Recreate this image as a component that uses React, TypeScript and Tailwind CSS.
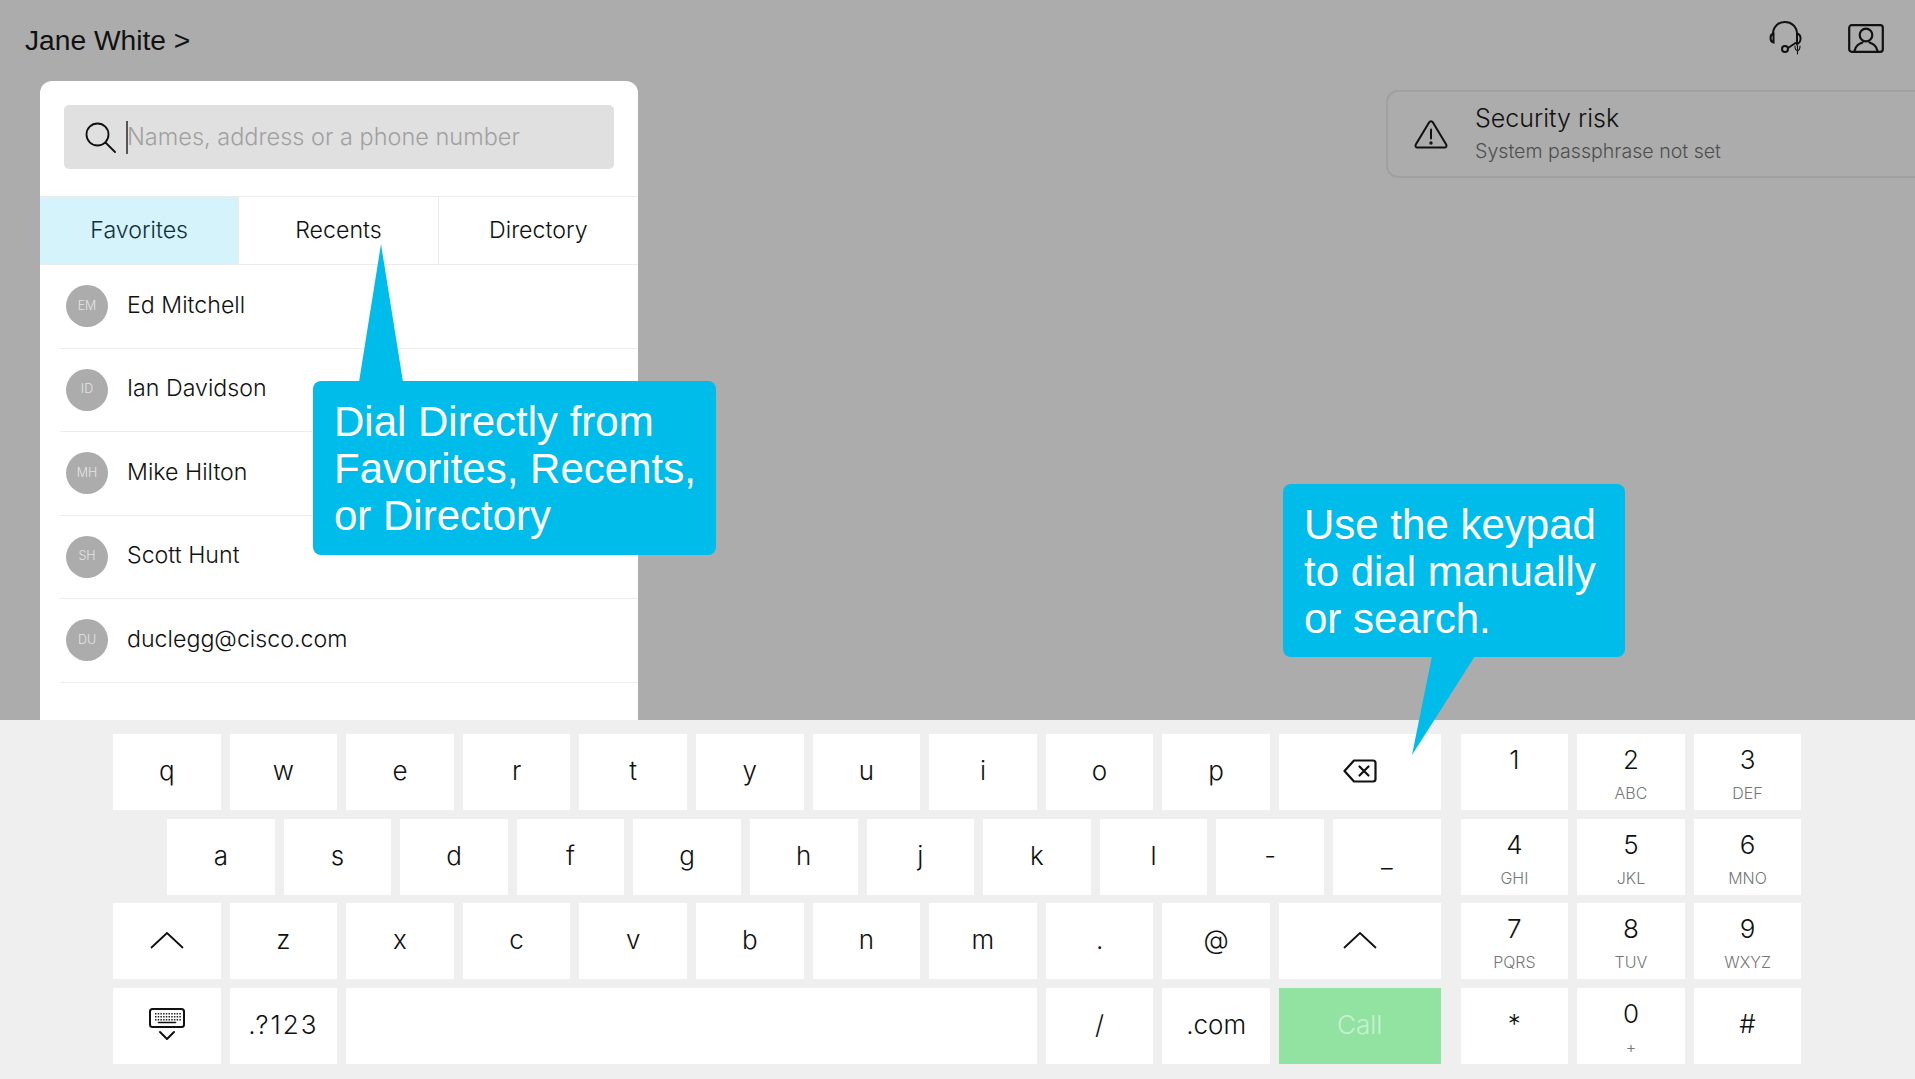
import { Fragment } from "react";

const inter = "font-['Inter','Liberation_Sans',sans-serif]";

const contacts = [
  { initials: "EM", name: "Ed Mitchell" },
  { initials: "ID", name: "Ian Davidson" },
  { initials: "MH", name: "Mike Hilton" },
  { initials: "SH", name: "Scott Hunt" },
  { initials: "DU", name: "duclegg@cisco.com" },
];

const numpad = [
  ["1", ""],
  ["2", "ABC"],
  ["3", "DEF"],
  ["4", "GHI"],
  ["5", "JKL"],
  ["6", "MNO"],
  ["7", "PQRS"],
  ["8", "TUV"],
  ["9", "WXYZ"],
  ["*", ""],
  ["0", "+"],
  ["#", ""],
];

function HeadsetIcon() {
  return (
    <svg width="34" height="34" viewBox="0 0 34 34" fill="none" stroke="#111" strokeWidth="2" strokeLinecap="round">
      <path d="M4 13 C4 5.5 9.5 1 16 1 C22.5 1 28 5.5 28 13" />
      <path d="M4.5 12.5 C0.5 13.5 0.5 20.5 4.5 21.5 Z" />
      <path d="M28 12.5 C32.5 13.5 33 21 28 23 Z" />
      <path d="M19 27 L26.5 22" />
      <circle cx="16" cy="28" r="3" />
      <path d="M28.5 24.5 V33 M26 25 C26 28.5 27 29.5 28.5 29.5 C30 29.5 31 28.5 31 25" strokeWidth="1.1" />
    </svg>
  );
}

function PersonBoxIcon() {
  return (
    <svg width="36" height="29" viewBox="0 0 36 29" fill="none" stroke="#111" strokeWidth="2.2" strokeLinecap="round">
      <rect x="1.2" y="1.2" width="33.6" height="26.6" rx="2.5" />
      <circle cx="18" cy="11" r="6.3" />
      <path d="M6.5 27 C7.5 21.5 11 20 14.5 18.5 M29.5 27 C28.5 21.5 25 20 21.5 18.5" />
    </svg>
  );
}

function WarningIcon() {
  return (
    <svg width="34" height="29" viewBox="0 0 34 29" fill="none" stroke="#111" strokeWidth="2" strokeLinejoin="round" strokeLinecap="round">
      <path d="M15.2 2.2 C16 0.8 18 0.8 18.8 2.2 L32.2 24.6 C33 26 32.2 27.6 30.6 27.6 H3.4 C1.8 27.6 1 26 1.8 24.6 Z" />
      <path d="M17 9.5 V18.5" />
      <circle cx="17" cy="23" r="0.7" fill="#111" />
    </svg>
  );
}

function SearchIcon() {
  return (
    <svg width="31" height="31" viewBox="0 0 31 31" fill="none" stroke="#111" strokeWidth="1.8" strokeLinecap="round">
      <circle cx="12.5" cy="12.5" r="11" />
      <path d="M20.5 20.5 L30 30" />
    </svg>
  );
}

function ChevronUpIcon() {
  return (
    <svg width="34" height="18" viewBox="0 0 34 18" fill="none" stroke="#111" strokeWidth="1.8" strokeLinecap="round" strokeLinejoin="round">
      <path d="M1.5 16.5 L17 2 L32.5 16.5" />
    </svg>
  );
}

function BackspaceIcon() {
  return (
    <svg width="34" height="24" viewBox="0 0 34 24" fill="none" stroke="#111" strokeWidth="2.2" strokeLinecap="round" strokeLinejoin="round">
      <path d="M11 1.5 H30 C31.5 1.5 32.5 2.5 32.5 4 V20 C32.5 21.5 31.5 22.5 30 22.5 H11 L1.5 12 Z" />
      <path d="M16.5 7.5 L25.5 16.5 M25.5 7.5 L16.5 16.5" />
    </svg>
  );
}

function KeyboardIcon() {
  const dots = [];
  for (let r = 0; r < 3; r++) {
    for (let c = 0; c < 10; c++) {
      dots.push(<rect key={`${r}-${c}`} x={6 + c * 2.7} y={5 + r * 3} width="1.5" height="1.5" fill="#222" />);
    }
  }
  return (
    <svg width="36" height="33" viewBox="0 0 36 33" fill="none" stroke="#111" strokeWidth="2" strokeLinecap="round" strokeLinejoin="round">
      <rect x="1" y="1" width="34" height="18" rx="2.5" />
      <g stroke="none">{dots}</g>
      <path d="M9.5 14.5 H26.5" strokeWidth="1.6" />
      <path d="M11 24 L18 31 L25 24" />
    </svg>
  );
}

function Key({ children, wide, span6 }: { children?: React.ReactNode; wide?: boolean; span6?: boolean }) {
  return (
    <div
      className={`h-[76px] pb-[3px] bg-white flex items-center justify-center shrink-0 text-[26px] font-light text-[#111] ${
        wide ? "w-[161.6px]" : span6 ? "w-[690.6px]" : "w-[107.6px]"
      }`}
    >
      {children}
    </div>
  );
}

function Callout({
  className,
  tail,
  tailClass,
  viewBox,
  lines,
}: {
  className: string;
  tail: string;
  tailClass: string;
  viewBox: string;
  lines: string[];
}) {
  return (
    <div className={`absolute bg-[#00bceb] rounded-[8px] text-white font-['Liberation_Sans',sans-serif] text-[42px] leading-[47px] pl-[21px] pt-[17px] ${className}`}>
      <svg className={`absolute ${tailClass}`} viewBox={viewBox} fill="#00bceb">
        <polygon points={tail} />
      </svg>
      {lines.map((l) => (
        <Fragment key={l}>
          <span className="relative whitespace-nowrap">{l}</span>
          <br />
        </Fragment>
      ))}
    </div>
  );
}

export default function App() {
  return (
    <div className={`relative w-[1915px] h-[1079px] overflow-hidden flex flex-col ${inter}`}>
      {/* Dimmed call screen */}
      <div className="h-[719.5px] shrink-0 bg-[#acacac] flex flex-col overflow-hidden">
        <div className="h-[81px] shrink-0 flex items-start justify-between pl-[25px] pr-[31px]">
          <div className="mt-[22px] text-[28.2px] leading-[36px] font-['Liberation_Sans',sans-serif] text-[#111]">Jane White &gt;</div>
          <div className="flex items-center gap-[45px] mt-[21px]">
            <HeadsetIcon />
            <PersonBoxIcon />
          </div>
        </div>

        <div className="flex-1 flex min-h-0">
          {/* Search panel */}
          <div className="w-[598px] ml-[40px] shrink-0 bg-white rounded-t-[12px] flex flex-col">
            <div className="mx-[24px] mt-[24px] h-[64px] bg-[#e0e0e0] rounded-[5px] flex items-center pl-[21px]">
              <SearchIcon />
              <div className="w-[2px] h-[33px] bg-[#555] ml-[10px]" />
              <span className="text-[23.5px] font-light text-[#a0a0a0] whitespace-nowrap -mt-[1px] -ml-[1px]">Names, address or a phone number</span>
            </div>

            <div className="mt-[27px] h-[69px] grid grid-cols-3 border-y border-[#ececec] text-[23.2px] font-light text-[#111]">
              <div className="bg-[#d5f3fa] flex items-center justify-center border-r border-[#ececec] text-[#12303a]">Favorites</div>
              <div className="flex items-center justify-center border-r border-[#ececec]">Recents</div>
              <div className="flex items-center justify-center">Directory</div>
            </div>

            {contacts.map((c) => (
              <div key={c.initials} className="ml-[20px] h-[83.5px] shrink-0 flex items-center border-b border-[#ececec]">
                <div className="w-[42px] h-[42px] ml-[6px] rounded-full bg-[#acacac] flex items-center justify-center text-[12.5px] font-light text-[#e4e4e4]">
                  {c.initials}
                </div>
                <span className="ml-[19px] text-[23.2px] font-light text-[#111] -mt-[2px]">{c.name}</span>
              </div>
            ))}
          </div>

          {/* Security notice */}
          <div className="ml-[748px] mt-[9px] w-[560px] h-[88px] shrink-0 border-2 border-[#a0a0a0] rounded-[12px] flex items-center pl-[26px]">
            <WarningIcon />
            <div className="ml-[27px]">
              <div className="text-[25px] leading-[32px] font-light text-[#111] -mt-[2px]">Security risk</div>
              <div className="mt-[4px] text-[19.6px] leading-[26px] font-light text-[#4f4f4f]">System passphrase not set</div>
            </div>
          </div>
        </div>
      </div>

      {/* Keyboard */}
      <div className="flex-1 bg-[#efefef] pt-[14.5px] pl-[113px] flex gap-[20px]">
        <div className="flex flex-col gap-y-[8.6px]">
          <div className="flex gap-[9px]">
            {"qwertyuiop".split("").map((k) => (
              <Key key={k}>{k}</Key>
            ))}
            <Key wide>
              <BackspaceIcon />
            </Key>
          </div>
          <div className="flex gap-[9px] pl-[54px]">
            {"asdfghjkl".split("").map((k) => (
              <Key key={k}>{k}</Key>
            ))}
            <Key>-</Key>
            <Key>
              <span className="mt-[6px]">_</span>
            </Key>
          </div>
          <div className="flex gap-[9px]">
            <Key>
              <ChevronUpIcon />
            </Key>
            {["z", "x", "c", "v", "b", "n", "m", ".", "@"].map((k) => (
              <Key key={k}>{k}</Key>
            ))}
            <Key wide>
              <ChevronUpIcon />
            </Key>
          </div>
          <div className="flex gap-[9px]">
            <Key>
              <KeyboardIcon />
            </Key>
            <Key>
              <span className="tracking-[2px]">.?123</span>
            </Key>
            <Key span6 />
            <Key>/</Key>
            <Key>.com</Key>
            <div className="w-[161.6px] h-[76px] pb-[3px] bg-[#92e3a2] flex items-center justify-center text-[26px] font-light text-[#c6f0cf]">Call</div>
          </div>
        </div>

        <div className="grid grid-cols-3 gap-x-[9px] gap-y-[8.6px] h-fit">
          {numpad.map(([d, s]) => (
            <div key={d} className="w-[107.6px] h-[76px] bg-white flex flex-col items-center">
              {s || d === "1" ? (
                <>
                  <span className="mt-[10px] text-[26px] leading-[32px] font-light text-[#111]">{d}</span>
                  <span className="mt-[7px] text-[16px] leading-[20px] font-light text-[#777]">{s}</span>
                </>
              ) : (
                <span className="mt-[20px] text-[26px] leading-[32px] font-light text-[#111]">{d}</span>
              )}
            </div>
          ))}
        </div>
      </div>

      {/* Annotation callouts */}
      <Callout
        className="left-[313px] top-[381px] w-[403px] h-[174px]"
        tailClass="left-[46px] top-[-137px] w-[44px] h-[138px]"
        viewBox="0 0 44 138"
        tail="22,0 44,138 0,138"
        lines={["Dial Directly from", "Favorites, Recents,", "or Directory"]}
      />
      <Callout
        className="left-[1283px] top-[484px] w-[342px] h-[173px]"
        tailClass="left-[129px] top-[172px] w-[63px] h-[99px]"
        viewBox="0 0 63 99"
        tail="20,0 63,0 0,99"
        lines={["Use the keypad", "to dial manually", "or search."]}
      />
    </div>
  );
}
